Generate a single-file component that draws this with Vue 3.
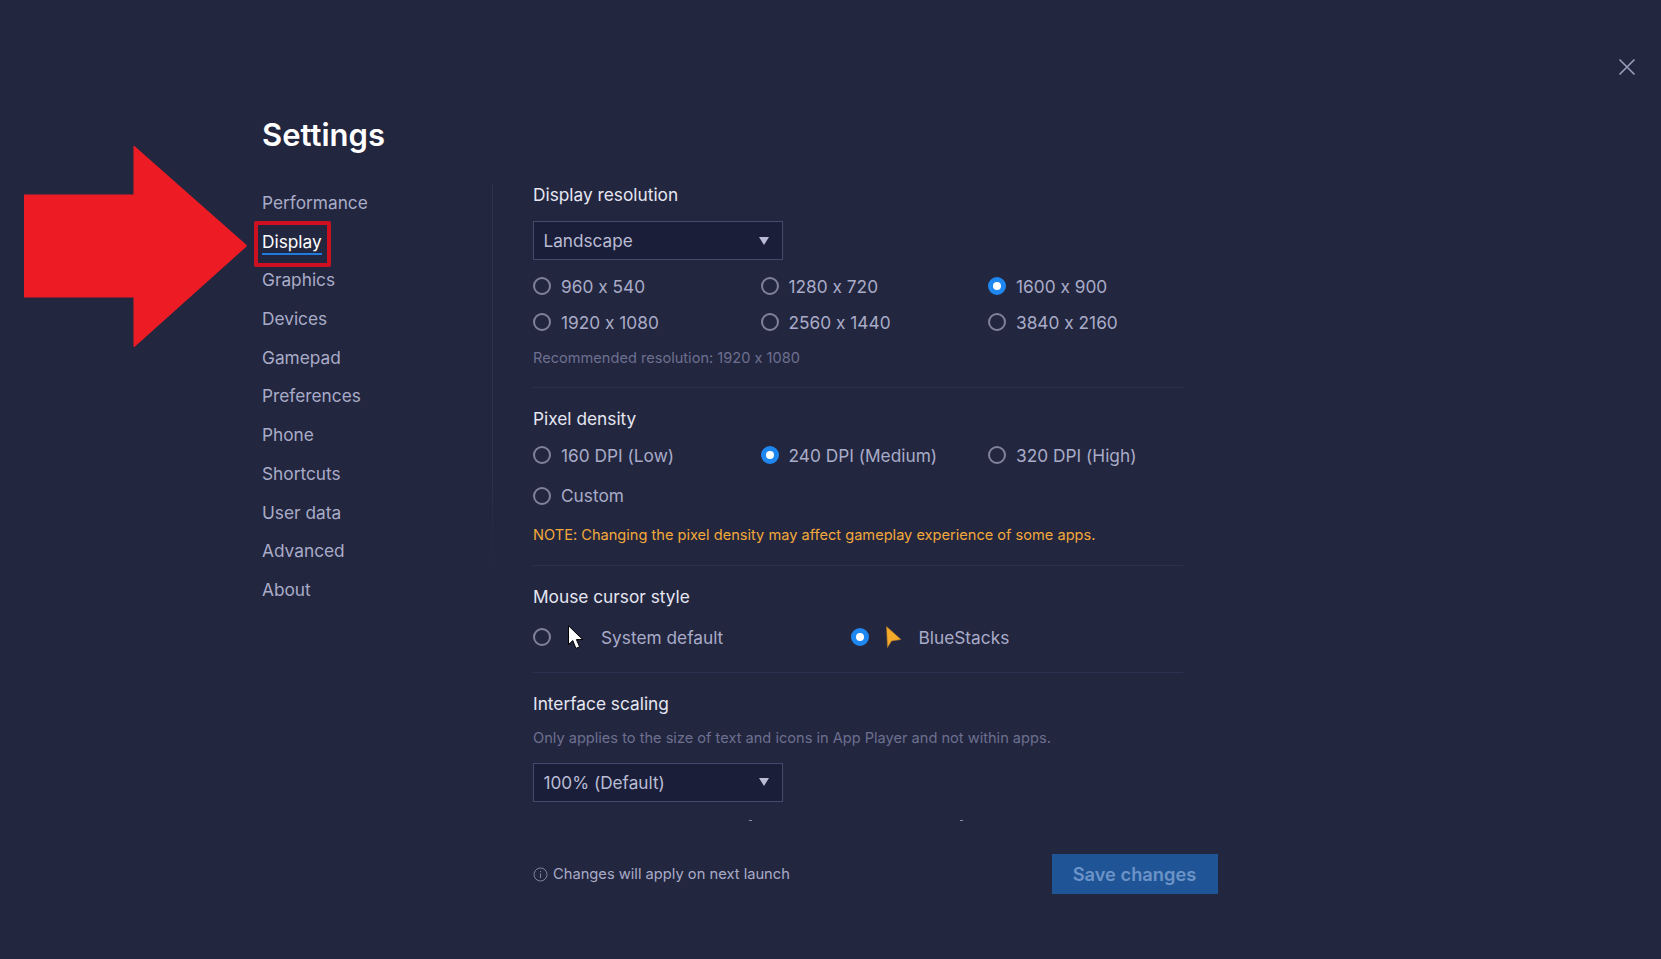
<template>
  <div class="settings-page">
    <button class="close-button" aria-label="Close">
      <svg width="18" height="18" viewBox="0 0 18 18" fill="none" stroke="#9a9dbb" stroke-width="1.6">
        <path d="M1.5 1.5 16.5 16.5M16.5 1.5 1.5 16.5" />
      </svg>
    </button>

    <svg class="red-arrow" width="224" height="203" viewBox="0 0 224 203">
      <path d="M0 49.5H109.5V1.5Q109.5 0 111 1.5L222 99.5Q223.5 100.5 222 102L111 201.5Q109.5 203 109.5 201V152.5H0Z" fill="#ed1c24" />
    </svg>

    <h1 class="page-title">Settings</h1>

    <div class="settings-body">
      <nav class="side-nav">
        <a
          v-for="item in navItems"
          :key="item"
          class="nav-item"
          :class="{ active: item === 'Display' }"
        >
          <span class="nav-label">{{ item }}</span>
        </a>
      </nav>

      <div class="content">
        <div class="scroll-area">
          <section class="block first">
            <h2>Display resolution</h2>
            <div class="select">
              <span>Landscape</span>
              <i class="caret"></i>
            </div>
            <div class="radio-grid resolution">
              <label v-for="r in resolutions" :key="r" class="radio-item">
                <span class="radio" :class="{ checked: r === '1600 x 900' }"></span>
                {{ r }}
              </label>
            </div>
            <p class="hint recommended">Recommended resolution: 1920 x 1080</p>
          </section>

          <section class="block density">
            <h2>Pixel density</h2>
            <div class="radio-grid dpi">
              <label v-for="d in densities" :key="d" class="radio-item">
                <span class="radio" :class="{ checked: d === '240 DPI (Medium)' }"></span>
                {{ d }}
              </label>
            </div>
            <p class="note">NOTE: Changing the pixel density may affect gameplay experience of some apps.</p>
          </section>

          <section class="block cursor">
            <h2>Mouse cursor style</h2>
            <div class="cursor-row">
              <label class="radio-item cursor-default">
                <span class="radio"></span>
                <svg class="cursor-icon" width="17" height="24" viewBox="0 0 17 24">
                  <path d="M1.5 .8V19.5L5.8 15.6 8.9 23.4 12.6 21.8 9.4 14.6H15.8Z" fill="#fff" stroke="#000" stroke-width="1" />
                </svg>
                <span class="cursor-text">System default</span>
              </label>
              <label class="radio-item">
                <span class="radio checked"></span>
                <svg class="cursor-icon" width="17" height="24" viewBox="0 0 17 24">
                  <path d="M1.5 1.5 16 14.5 6.5 16 2.5 22.5Z" fill="#f6aa2a" stroke="#a8772c" stroke-width=".6" />
                </svg>
                <span class="cursor-text">BlueStacks</span>
              </label>
            </div>
          </section>

          <section class="block scaling">
            <h2>Interface scaling</h2>
            <p class="hint scaling-hint">Only applies to the size of text and icons in App Player and not within apps.</p>
            <div class="select">
              <span>100% (Default)</span>
              <i class="caret"></i>
            </div>
            <div class="next-marks"><i></i><i></i></div>
          </section>
        </div>

        <div class="footer">
          <div class="footer-info">
            <svg width="15" height="15" viewBox="0 0 15 15" fill="none" stroke="#7f829f" stroke-width="1">
              <circle cx="7.5" cy="7.5" r="6.5" />
              <path d="M7.5 6.5V11M7.5 4V5.2" />
            </svg>
            Changes will apply on next launch
          </div>
          <button class="save-button">Save changes</button>
        </div>
      </div>
    </div>
  </div>
</template>

<script setup>
const navItems = [
  'Performance',
  'Display',
  'Graphics',
  'Devices',
  'Gamepad',
  'Preferences',
  'Phone',
  'Shortcuts',
  'User data',
  'Advanced',
  'About'
]

const resolutions = ['960 x 540', '1280 x 720', '1600 x 900', '1920 x 1080', '2560 x 1440', '3840 x 2160']
const densities = ['160 DPI (Low)', '240 DPI (Medium)', '320 DPI (High)', 'Custom']
</script>

<style>
html,
body {
  margin: 0;
  background: #23263f;
}
</style>

<style scoped>
.settings-page {
  position: relative;
  box-sizing: border-box;
  width: 1661px;
  height: 959px;
  padding: 115px 0 0 262px;
  overflow: hidden;
  background: #23263f;
  font-family: Inter, "Noto Sans", sans-serif;
  font-feature-settings: "calt" 0;
  color: #a9acc8;
}

.close-button {
  position: absolute;
  top: 58px;
  right: 25px;
  padding: 0;
  border: 0;
  background: none;
  line-height: 0;
}

.red-arrow {
  position: absolute;
  left: 24px;
  top: 145px;
}

.page-title {
  margin: 0;
  height: 40px;
  font-size: 31px;
  line-height: 40px;
  font-weight: 600;
  color: #fff;
}

.settings-body {
  display: flex;
  margin-top: 28px;
}

.side-nav {
  display: flex;
  flex-direction: column;
  width: 231px;
  height: 387px;
  margin-top: 1px;
  border-right: 1px solid transparent;
  border-image: linear-gradient(to bottom, #2f3252 70%, #23263f) 1;
  box-sizing: border-box;
}

.nav-item {
  position: relative;
  flex: none;
  height: 38.7px;
  line-height: 38.7px;
  font-size: 17.3px;
  color: #a9acc8;
}

.nav-item.active .nav-label {
  position: relative;
  color: #fff;
}

.nav-item.active .nav-label::after {
  content: '';
  position: absolute;
  left: 0;
  right: 0;
  bottom: -3px;
  height: 2px;
  background: #1f7ae0;
}

.nav-item.active::before {
  content: '';
  position: absolute;
  left: -8px;
  top: -2px;
  width: 69px;
  height: 38px;
  border: 4px solid #cf1020;
  border-radius: 2px;
}

.content {
  width: 700px;
  margin-left: 40px;
}

.scroll-area {
  width: 650px;
  height: 639px;
  overflow: hidden;
}

.block h2 {
  margin: 0;
  height: 24px;
  font-size: 17.3px;
  line-height: 24px;
  font-weight: 400;
  color: #e6e7f2;
}

.block + .block {
  border-top: 1px solid #2d3050;
}

.select {
  display: flex;
  align-items: center;
  justify-content: space-between;
  box-sizing: border-box;
  width: 250px;
  height: 39px;
  margin-top: 14px;
  padding: 0 13px 0 9.5px;
  border: 1px solid #45496b;
  background: #1b1e38;
  font-size: 17.2px;
  color: #b9bcd4;
}

.caret {
  width: 0;
  height: 0;
  border-left: 5.5px solid transparent;
  border-right: 5.5px solid transparent;
  border-top: 8px solid #b9bcd4;
}

.radio-grid {
  display: grid;
  grid-template-columns: repeat(3, 227.5px);
}

.radio-grid.resolution {
  margin-top: 8px;
  grid-auto-rows: 36px;
}

.radio-grid.dpi {
  margin-top: 4.5px;
  grid-auto-rows: 40.5px;
}

.radio-item {
  display: flex;
  align-items: center;
  gap: 10px;
  font-size: 17.3px;
  color: #a9acc8;
}

.radio {
  flex: none;
  box-sizing: border-box;
  width: 18px;
  height: 18px;
  border: 2px solid #7f8299;
  border-radius: 50%;
}

.radio.checked {
  border: 5px solid #1f87f0;
  background: #fff;
}

.hint {
  margin: 0;
  font-size: 14.6px;
  line-height: 20px;
  color: #6d7090;
}

.recommended {
  margin-top: 8px;
  padding-bottom: 19px;
}

.density {
  padding-top: 18.5px;
}

.note {
  margin: 9px 0 0;
  padding-bottom: 20px;
  font-size: 14.6px;
  line-height: 20px;
  color: #f2a93b;
}

.cursor {
  padding-top: 19px;
}

.cursor-row {
  display: flex;
  align-items: center;
  height: 36px;
  margin-top: 10px;
  padding-bottom: 17px;
}

.cursor-default {
  width: 317.5px;
}

.cursor-icon {
  margin-left: 6px;
}

.cursor-text {
  margin-left: 7px;
}

.scaling {
  padding-top: 18.5px;
}

.scaling-hint {
  margin-top: 12.5px;
}

.scaling .select {
  margin-top: 14.5px;
}

.next-marks {
  position: relative;
  display: flex;
  gap: 208px;
  margin: 18px 0 0 216px;
}

.next-marks i {
  width: 3px;
  height: 1px;
  background: #8b8eab;
}

.footer {
  display: flex;
  align-items: center;
  justify-content: space-between;
  width: 684.5px;
  margin-top: 32px;
}

.footer-info {
  display: flex;
  align-items: center;
  gap: 5px;
  font-size: 14.7px;
  color: #a9acc8;
}

.save-button {
  box-sizing: border-box;
  width: 166px;
  height: 40px;
  padding: 0;
  border: 0;
  background: #1f5596;
  font-family: inherit;
  font-size: 18.3px;
  font-weight: 600;
  color: #6c93c7;
}
</style>
